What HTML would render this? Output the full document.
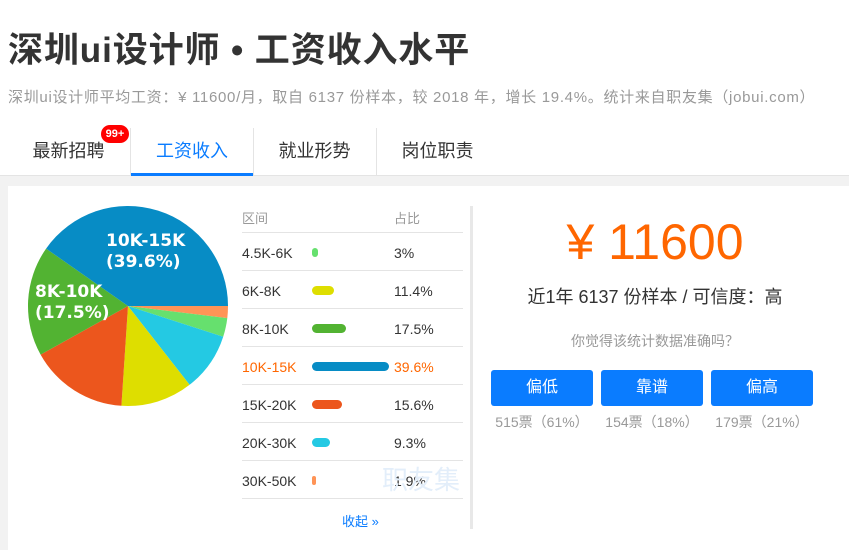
<!DOCTYPE html>
<html><head><meta charset="utf-8"><style>
*{margin:0;padding:0;box-sizing:border-box}
body{width:849px;height:550px;overflow:hidden;background:#f2f2f2;font-family:"Liberation Sans","Noto Sans CJK SC",sans-serif;position:relative}
.top{position:absolute;left:0;top:0;width:849px;height:176px;background:#fff;border-bottom:1px solid #e4e4e4}
h1{position:absolute;left:8px;top:22px;font-size:35px;font-weight:bold;color:#333;white-space:nowrap;letter-spacing:0.9px}
.sub{position:absolute;left:8px;top:86px;font-size:15px;color:#999;white-space:nowrap;letter-spacing:0.7px}
.tab{position:absolute;top:128px;height:48px;line-height:46px;font-size:18px;color:#333;text-align:center}
.sep{position:absolute;top:128px;width:1px;height:47px;background:#e4e4e4}
.badge{position:absolute;left:101px;top:125px;width:28px;height:18px;border-radius:9px;background:#f00;color:#fff;font-size:11px;font-weight:bold;text-align:center;line-height:18px}
.card{position:absolute;left:8px;top:186px;width:841px;height:364px;background:#fff}
.vd{position:absolute;left:470px;top:206px;width:3px;height:323px;background:#e8e8e8}
.row{position:absolute;left:242px;width:221px;height:38px;border-bottom:1px solid #e4e4e4;font-size:14px;color:#333}
.row span{position:absolute;top:12px}
.row i{position:absolute;left:70px;top:15px;height:9px;border-radius:5px}
.row b{position:absolute;left:152px;top:12px;font-weight:normal}
.btn{position:absolute;top:370px;width:102px;height:36px;background:#0a7cff;border-radius:3px;color:#fff;font-size:16px;text-align:center;line-height:36px}
.vt{position:absolute;top:412px;width:102px;text-align:center;font-size:14px;color:#999}
</style></head><body>
<div class="top">
<h1>深圳ui设计师 • 工资收入水平</h1>
<div class="sub">深圳ui设计师平均工资：¥ 11600/月，取自 6137 份样本，较 2018 年，增长 19.4%。统计来自职友集（jobui.com）</div>
<div class="tab" style="left:3px;width:131px">最新招聘</div>
<div class="badge">99+</div>
<div class="sep" style="left:130px"></div>
<div class="tab" style="left:131px;width:122px;color:#0a7cff;border-bottom:3px solid #0a7cff">工资收入</div>
<div class="sep" style="left:253px"></div>
<div class="tab" style="left:253px;width:123px">就业形势</div>
<div class="sep" style="left:376px"></div>
<div class="tab" style="left:376px;width:123px">岗位职责</div>
</div>
<div class="card"></div>
<svg style="position:absolute;left:0;top:0" width="240" height="420">
<path d="M128 306 L228 306 A100 100 0 0 1 227.3 318.1Z" fill="#ff9456"/>
<path d="M128 306 L227.3 318.1 A100 100 0 0 1 223.2 336.7Z" fill="#66e06e"/>
<path d="M128 306 L223.2 336.7 A100 100 0 0 1 189.6 384.8Z" fill="#24c9e3"/>
<path d="M128 306 L189.6 384.8 A100 100 0 0 1 121.4 405.8Z" fill="#dede00"/>
<path d="M128 306 L121.4 405.8 A100 100 0 0 1 40.6 354.6Z" fill="#ec561d"/>
<path d="M128 306 L40.6 354.6 A100 100 0 0 1 46.1 248.6Z" fill="#52b332"/>
<path d="M128 306 L46.1 248.6 A100 100 0 0 1 228 306Z" fill="#078cc5"/>
<g fill="#fff" font-family="DejaVu Sans,sans-serif" font-weight="bold" font-size="17">
<text x="106" y="246">10K-15K</text><text x="106" y="267">(39.6%)</text>
<text x="35" y="297">8K-10K</text><text x="35" y="318">(17.5%)</text></g>
</svg>
<div style="position:absolute;left:242px;top:206px;width:221px;height:27px;border-bottom:1px solid #e4e4e4;font-size:13px;color:#999"><span style="position:absolute;top:2px">区间</span><span style="position:absolute;left:152px;top:2px">占比</span></div>
<div class="row" style="top:233px"><span>4.5K-6K</span><i style="width:6px;background:#66e06e"></i><b>3%</b></div>
<div class="row" style="top:271px"><span>6K-8K</span><i style="width:22px;background:#dede00"></i><b>11.4%</b></div>
<div class="row" style="top:309px"><span>8K-10K</span><i style="width:34px;background:#52b332"></i><b>17.5%</b></div>
<div class="row" style="top:347px;color:#f60"><span>10K-15K</span><i style="width:77px;background:#078cc5"></i><b>39.6%</b></div>
<div class="row" style="top:385px"><span>15K-20K</span><i style="width:30px;background:#ec561d"></i><b>15.6%</b></div>
<div class="row" style="top:423px"><span>20K-30K</span><i style="width:18px;background:#24c9e3"></i><b>9.3%</b></div>
<div class="row" style="top:461px"><span>30K-50K</span><i style="width:4px;background:#ff9456"></i><b>1.9%</b></div>
<div style="position:absolute;left:382px;top:460px;font-size:26px;color:#e3eefa">职友集</div>
<div style="position:absolute;left:342px;top:511px;font-size:13px;color:#0a7cff">收起 »</div>
<div class="vd"></div>
<div style="position:absolute;left:480px;top:212px;width:350px;text-align:center;font-size:50px;color:#f60;line-height:60px">¥ 11600</div>
<div style="position:absolute;left:480px;top:283px;width:350px;text-align:center;font-size:18px;color:#333">近1年 6137 份样本 / 可信度：高</div>
<div style="position:absolute;left:480px;top:331px;width:350px;text-align:center;font-size:14px;color:#999">你觉得该统计数据准确吗？</div>
<div class="btn" style="left:491px">偏低</div>
<div class="btn" style="left:601px">靠谱</div>
<div class="btn" style="left:711px">偏高</div>
<div class="vt" style="left:491px">515票（61%）</div>
<div class="vt" style="left:601px">154票（18%）</div>
<div class="vt" style="left:711px">179票（21%）</div>
</body></html>
